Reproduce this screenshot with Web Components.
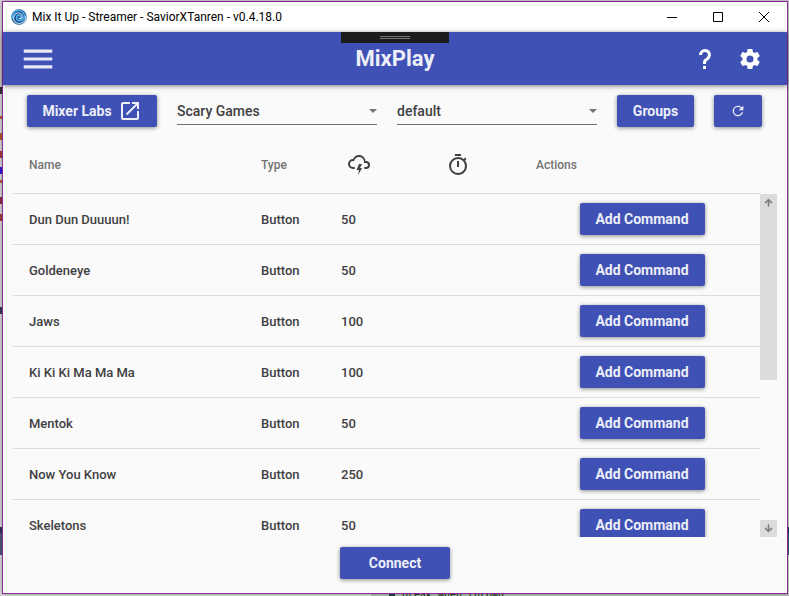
<!DOCTYPE html>
<html lang="en">
<head>
<meta charset="utf-8">
<title>Mix It Up</title>
<style>
html, body { height: 100%; }
body { margin: 0; font-family: Roboto, "Liberation Sans", sans-serif; font-weight: 500; color: #404042; }
</style>
</head>
<body>
<mix-desktop>
  <mix-window caption="Mix It Up - Streamer - SaviorXTanren - v0.4.18.0">
    <mix-header heading="MixPlay"></mix-header>
    <mix-toolbar></mix-toolbar>
    <mix-commands></mix-commands>
    <mix-footer><mix-button style="--button-width:110px">Connect</mix-button></mix-footer>
  </mix-window>
</mix-desktop>
<script>
const ICONS = {
  menu: 'M3,6H21V8H3V6M3,11H21V13H3V11M3,16H21V18H3V16Z',
  help: 'M10,19H13V22H10V19M12,2C17.35,2.22 19.68,7.62 16.5,11.67C15.67,12.67 14.33,13.33 13.67,14.17C13,15 13,16 13,17H10C10,15.33 10,13.92 10.67,12.92C11.33,11.92 12.67,11.33 13.5,10.67C15.92,8.43 15.32,5.26 12,5A3,3 0 0,0 9,8H6A6,6 0 0,1 12,2Z',
  gear: 'M12,15.5A3.5,3.5 0 0,1 8.5,12A3.5,3.5 0 0,1 12,8.5A3.5,3.5 0 0,1 15.5,12A3.5,3.5 0 0,1 12,15.5M19.43,12.97C19.47,12.65 19.5,12.33 19.5,12C19.5,11.67 19.47,11.34 19.43,11L21.54,9.37C21.73,9.22 21.78,8.95 21.66,8.73L19.66,5.27C19.54,5.05 19.27,4.96 19.05,5.05L16.56,6.05C16.04,5.66 15.5,5.32 14.87,5.07L14.5,2.42C14.46,2.18 14.25,2 14,2H10C9.75,2 9.54,2.18 9.5,2.42L9.13,5.07C8.5,5.32 7.96,5.66 7.44,6.05L4.95,5.05C4.73,4.96 4.46,5.05 4.34,5.27L2.34,8.73C2.21,8.95 2.27,9.22 2.46,9.37L4.57,11C4.53,11.34 4.5,11.67 4.5,12C4.5,12.33 4.53,12.65 4.57,12.97L2.46,14.63C2.27,14.78 2.21,15.05 2.34,15.27L4.34,18.73C4.46,18.95 4.73,19.03 4.95,18.95L7.44,17.94C7.96,18.34 8.5,18.68 9.13,18.93L9.5,21.58C9.54,21.82 9.75,22 10,22H14C14.25,22 14.46,21.82 14.5,21.58L14.87,18.93C15.5,18.67 16.04,18.34 16.56,17.94L19.05,18.95C19.27,19.03 19.54,18.95 19.66,18.73L21.66,15.27C21.78,15.05 21.73,14.78 21.54,14.63L19.43,12.97Z',
  open: 'M14,3V5H17.59L7.76,14.83L9.17,16.24L19,6.41V10H21V3M19,19H5V5H12V3H5C3.89,3 3,3.9 3,5V19A2,2 0 0,0 5,21H19A2,2 0 0,0 21,19V12H19V19Z',
  refresh: 'M17.65,6.35C16.2,4.9 14.21,4 12,4A8,8 0 0,0 4,12A8,8 0 0,0 12,20C15.73,20 18.84,17.45 19.73,14H17.65C16.83,16.33 14.61,18 12,18A6,6 0 0,1 6,12A6,6 0 0,1 12,6C13.66,6 15.14,6.69 16.22,7.78L13,11H20V4L17.65,6.35Z',
  storm: 'M6,16A5,5 0 0,1 1,11A5,5 0 0,1 6,6C7,3.65 9.3,2 12,2C15.43,2 18.24,4.66 18.5,8.03L19,8A4,4 0 0,1 23,12A4,4 0 0,1 19,16H18A1,1 0 0,1 17,15A1,1 0 0,1 18,14H19A2,2 0 0,0 21,12A2,2 0 0,0 19,10H17V9A5,5 0 0,0 12,4C9.5,4 7.45,5.82 7.06,8.19C6.73,8.07 6.37,8 6,8A3,3 0 0,0 3,11A3,3 0 0,0 6,14H7A1,1 0 0,1 8,15A1,1 0 0,1 7,16H6M12,11H15L13,15H15L11.25,22L12,17H9.5L12,11Z',
  timer: 'M12,20A7,7 0 0,1 5,13A7,7 0 0,1 12,6A7,7 0 0,1 19,13A7,7 0 0,1 12,20M19.03,7.39L20.45,5.97C20,5.46 19.55,5 19.04,4.56L17.62,6C16.07,4.74 14.12,4 12,4A9,9 0 0,0 3,13A9,9 0 0,0 12,22C17,22 21,17.97 21,13C21,10.88 20.26,8.93 19.03,7.39M11,14H13V8H11M15,1H9V3H15V1Z',
  up: 'M13,20H11V8L5.5,13.5L4.08,12.08L12,4.16L19.92,12.08L18.5,13.5L13,8V20Z',
  down: 'M11,4H13V16L18.5,10.5L19.92,11.92L12,19.84L4.08,11.92L5.5,10.5L11,16V4Z'
};
const BASE = '<style>*{box-sizing:border-box}:host{box-sizing:border-box;display:block}button{font:inherit;color:inherit;border:0;padding:0;background:none;display:flex;align-items:center;justify-content:center}</style>';
function define(name, render) {
  customElements.define(name, class extends HTMLElement {
    constructor() { super(); this.attachShadow({ mode: 'open' }); }
    connectedCallback() { this.shadowRoot.innerHTML = BASE + render(this); }
  });
}

define('mix-icon', el => `<style>:host{display:block;flex:none}svg{display:block;fill:currentColor}.heavy{stroke:currentColor;stroke-width:1.500}</style>
<svg class="${el.hasAttribute('heavy') ? 'heavy' : ''}" width="${el.getAttribute('size') || 24}" height="${el.getAttribute('size') || 24}" viewBox="0 0 24 24" aria-hidden="true"><path d="${ICONS[el.getAttribute('name')]}"/></svg>`);

define('mix-button', el => `<style>
:host{display:block;flex:none}
button{height:32px;width:var(--button-width,auto);gap:6px;border-radius:2px;background:#3f51b5;color:#eceef8;font-size:14px;font-weight:700;line-height:20px;white-space:nowrap;box-shadow:0 1px 4px rgba(0,0,0,.45)}
</style><button type="button" ${el.hasAttribute('label') ? `aria-label="${el.getAttribute('label')}"` : ''}><slot></slot></button>`);

/* Editor that shows round the edges of the app window */
define('mix-desktop', () => `<style>
:host{height:100%;position:relative;overflow:hidden;background:#d6d6d6;padding:1px 1px 2px 2px}
.behind{position:absolute;inset:0;overflow:hidden}
i{position:absolute;left:0;width:2px;height:7px}
.band{position:absolute;left:0;right:0;height:28px;top:527px;background:#4a5478;border-top:6px solid #2b335c}
.below{position:absolute;left:0;right:0;top:555px;bottom:0;background:#dcdcdc}
.dock{position:absolute;left:371px;right:0;bottom:0;height:3px;background:#bcbcc0}
.mark{position:absolute;left:389px;width:6px;bottom:0;height:3px;background:#33405f}
.code{position:absolute;left:402px;bottom:-6px;font:400 10px/12px "Liberation Mono",monospace;color:#111;white-space:nowrap}
slot{display:block;position:relative;height:100%}
</style>
<div class="behind">
<i style="top:87px;background:#333"></i><i style="top:116px;height:3px;background:#b5562e"></i><i style="top:133px;background:#b5562e"></i><i style="top:151px;background:#a33c3c"></i><i style="top:167px;background:#3010e0"></i><i style="top:180px;height:3px;background:#b5562e"></i><i style="top:197px;background:#942c3c"></i><i style="top:214px;background:#a33c3c"></i><i style="top:307px;background:#333a55"></i>
<div class="band"></div><div class="below"></div><div class="dock"></div><div class="mark"></div><div class="code">break when thrown</div></div>
<slot></slot>`);

define('mix-window', el => `<style>
:host{height:100%;border:1px solid #8c2a9c;background:#fafafa;display:flex;flex-direction:column;box-shadow:0 0 4px rgba(0,0,0,.35)}
.bar{flex:none;height:30px;background:#fff;color:#000;display:flex;align-items:center;padding-left:8px;font:400 12px/16px Roboto,"Open Sans",sans-serif}
.title{flex:1;white-space:nowrap;padding-left:5px}
.bar button{width:46px;height:30px}
svg{display:block}
</style>
<div class="bar">
<svg width="16" height="16" viewBox="0 0 16 16" aria-hidden="true"><circle cx="8" cy="8" r="7.7" fill="#1d4b8c"/><g fill="none" stroke-linecap="round"><path d="M1.2 9C.8 4.500 4 1.400 8 1.500c4 .1 6 3.500 5.300 6.500-.7 3-4 4.500-6.300 3.200C5 10 5 7.200 7 6.400c1.600-.6 3 .6 2.600 1.900" stroke="#4aaee8" stroke-width="1.700"/><path d="M14.800 7c.5 4-2.800 7.600-6.800 7.500-3.300-.1-5.600-2.400-5.500-5.600C2.600 6 5 3.900 7.700 4c2.500.1 3.900 2 3.500 4-.4 1.500-2 2.200-3.200 1.500" stroke="#b4e0f5" stroke-width="1.200"/></g></svg>
<span class="title">${el.getAttribute('caption')}</span>
<button type="button" aria-label="Minimize"><svg width="10" height="10"><path d="M0 5.500H10" stroke="#000"/></svg></button>
<button type="button" aria-label="Maximize"><svg width="10" height="10"><path d="M.5 .5H9.500V9.500H.5Z" fill="none" stroke="#000"/></svg></button>
<button type="button" aria-label="Close"><svg width="10" height="10"><path d="M0 0L10 10M10 0L0 10" stroke="#000"/></svg></button>
</div><slot></slot>`);

define('mix-header', el => `<style>
:host{flex:none;height:53px;position:relative;background:#3f51b5;color:#fff;display:grid;grid-template-columns:1fr auto 1fr;align-items:center;padding:0 25px 0 16px;box-shadow:0 1px 5px rgba(0,0,0,.5)}
h1{margin:0;font-size:22px;line-height:28px;font-weight:700;color:#eceef8;padding-left:9px}
.menu{justify-self:start;color:#e6e8f5}
.right{justify-self:end;display:flex;gap:21px}
.grip{position:absolute;top:0;left:50%;margin-left:-54px;width:108px;height:11px;background:#1c1c1c;display:flex;flex-direction:column;align-items:center;justify-content:center;gap:1px}
.grip span{width:30px;height:1px;background:#777}
</style>
<button class="menu" type="button" aria-label="Menu"><mix-icon name="menu" size="38"></mix-icon></button>
<h1>${el.getAttribute('heading')}</h1>
<div class="right"><button type="button" aria-label="Help"><mix-icon name="help"></mix-icon></button><button type="button" aria-label="Settings"><mix-icon name="gear"></mix-icon></button></div>
<div class="grip"><span></span><span></span></div>`);

define('mix-select', el => `<style>
:host{flex:1;min-width:0;position:relative}
select{display:block;width:100%;height:30px;appearance:none;border:0;border-bottom:1px solid #737373;border-radius:0;background:none;font:inherit;font-size:14px;color:#404042;padding:3px 20px 0 0;outline:0}
svg{position:absolute;right:0;top:14px;pointer-events:none}
</style><select aria-label="${el.getAttribute('label')}"><option>${el.getAttribute('value')}</option></select>
<svg width="8" height="4" aria-hidden="true"><path d="M0 0H8L4 4Z" fill="#737373"/></svg>`);

define('mix-toolbar', () => `<style>
:host{flex:none;display:flex;gap:20px;padding:10px 25px 10px 24px}
</style>
<mix-button style="--button-width:130px">Mixer Labs<mix-icon name="open"></mix-icon></mix-button>
<mix-select label="Game" value="Scary Games"></mix-select>
<mix-select label="Scene" value="default"></mix-select>
<mix-button style="--button-width:77px">Groups</mix-button>
<mix-button label="Refresh" style="--button-width:48px"><mix-icon name="refresh" size="16"></mix-icon></mix-button>`);

const COMMANDS = [['Dun Dun Duuuun!', 50], ['Goldeneye', 50], ['Jaws', 100], ['Ki Ki Ki Ma Ma Ma', 100], ['Mentok', 50], ['Now You Know', 250], ['Skeletons', 50]];
define('mix-commands', () => `<style>
:host{flex:1;min-height:0;display:flex;padding:0 10px}
.view{flex:1;min-width:0;overflow:hidden}
table{width:100%;table-layout:fixed;border-collapse:separate;border-spacing:0;font-size:13px;line-height:18px}
th,td{padding:0 0 0 16px;text-align:left;border-bottom:1px solid #dcdcdc;white-space:nowrap}
th{height:57px;font-size:12px;font-weight:500;color:#737373}
td{height:51px;padding-top:2px}
th.icon{padding-left:22px;color:#404042}
td:last-child{padding:0 0 0 4px}
td mix-button{width:125px;margin:0 auto}
.rail{flex:none;width:17px;margin-top:57px;display:flex;flex-direction:column;justify-content:space-between;color:#777}
.rail button{width:17px;height:17px;background:#dcdcdc}
.thumb{height:169px;background:#dcdcdc}
</style>
<div class="view"><table>
<colgroup><col><col style="width:80px"><col style="width:99px"><col style="width:96px"><col style="width:240px"></colgroup>
<thead><tr><th>Name</th><th>Type</th><th class="icon" aria-label="Cost"><mix-icon name="storm"></mix-icon></th><th class="icon" aria-label="Cooldown"><mix-icon name="timer"></mix-icon></th><th>Actions</th></tr></thead>
<tbody>${COMMANDS.map(([n, c]) => `<tr><td>${n}</td><td>Button</td><td>${c}</td><td></td><td><mix-button style="--button-width:125px">Add Command</mix-button></td></tr>`).join('')}</tbody>
</table></div>
<div class="rail"><div><button type="button" aria-label="Scroll up"><mix-icon name="up" size="11" heavy></mix-icon></button><div class="thumb"></div></div>
<button type="button" aria-label="Scroll down"><mix-icon name="down" size="11" heavy></mix-icon></button></div>`);

define('mix-footer', () => `<style>:host{flex:none;display:flex;justify-content:center;padding:10px 0 14px}</style><slot></slot>`);
</script>
</body>
</html>
